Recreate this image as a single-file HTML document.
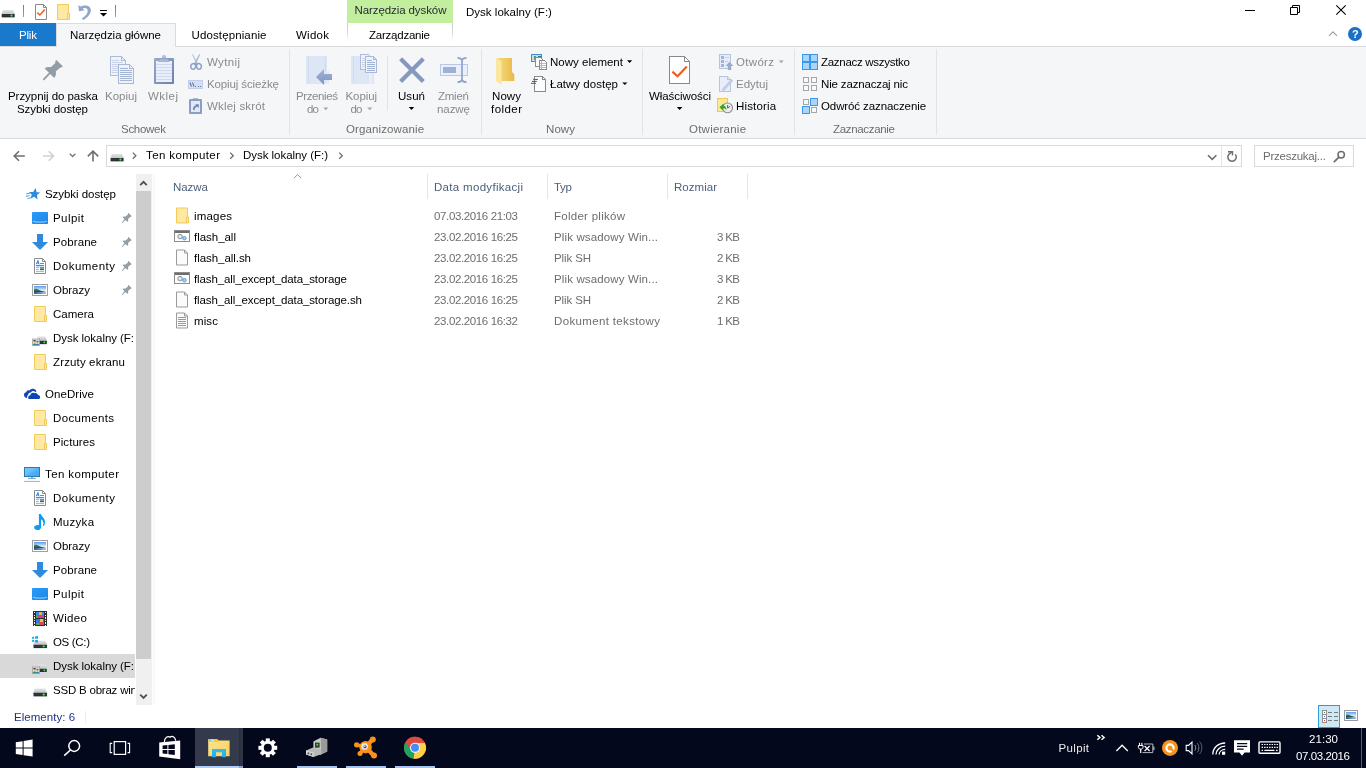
<!DOCTYPE html>
<html lang="pl">
<head>
<meta charset="utf-8">
<title>Dysk lokalny (F:)</title>
<style>
html,body{margin:0;padding:0;}
body{width:1366px;height:768px;overflow:hidden;background:#fff;position:relative;
 font-family:"Liberation Sans",sans-serif;font-size:12px;color:#000;}
.b{position:absolute;}
.t{position:absolute;white-space:pre;line-height:16px;height:16px;font-size:11.5px;}
svg{position:absolute;overflow:visible;}
.txt{position:absolute;left:0;top:0;width:1366px;height:768px;will-change:transform;}
.sep{position:absolute;width:1px;background:#e2e3e4;}
</style>
</head>
<body>
<!-- ===== title bar + ribbon tabs ===== -->
<div class="b" style="left:0;top:0;width:1366px;height:46px;background:#fff"></div>
<div class="b" style="left:347px;top:0;width:106px;height:23px;background:#c1ef9d"></div>
<div class="b" style="left:347px;top:23px;width:1px;height:18px;background:linear-gradient(#c9c7ca,#dcdcdd 60%,#fff)"></div>
<div class="b" style="left:452px;top:23px;width:1px;height:18px;background:linear-gradient(#c9c7ca,#dcdcdd 60%,#fff)"></div>
<div class="b" style="left:0;top:23px;width:56px;height:23px;background:#1979ca"></div>
<!-- ribbon body -->
<div class="b" style="left:0;top:46px;width:1366px;height:93px;background:#f5f6f7;border-top:1px solid #dadbdc;border-bottom:1px solid #dadbdc;box-sizing:border-box"></div>
<!-- active tab -->
<div class="b" style="left:56px;top:23px;width:120px;height:24px;background:#f5f6f7;border:1px solid #dadbdc;border-bottom:none;box-sizing:border-box"></div>
<!-- ribbon group separators -->
<div class="sep" style="left:289px;top:49px;height:86px"></div>
<div class="sep" style="left:481px;top:49px;height:86px"></div>
<div class="sep" style="left:642px;top:49px;height:86px"></div>
<div class="sep" style="left:794px;top:49px;height:86px"></div>
<div class="sep" style="left:936px;top:49px;height:86px"></div>
<div class="sep" style="left:387px;top:56px;height:55px"></div>

<!-- ===== address bar ===== -->
<div class="b" style="left:106px;top:145px;width:1136px;height:22px;border:1px solid #d9d9d9;box-sizing:border-box;background:#fff"></div>
<div class="b" style="left:1221px;top:146px;width:1px;height:20px;background:#e5e5e5"></div>
<div class="b" style="left:1254px;top:145px;width:100px;height:22px;border:1px solid #d9d9d9;box-sizing:border-box;background:#fff"></div>

<!-- ===== nav pane ===== -->
<div class="b" style="left:0;top:654px;width:135px;height:24px;background:#d9d9d9"></div>
<div class="b" style="left:136px;top:174px;width:16px;height:531px;background:#f0f0f0"></div>
<div class="b" style="left:136px;top:191px;width:15px;height:468px;background:#cdcdcd"></div>

<div class="b" style="left:153px;top:174px;width:2px;height:531px;background:#f8f8f8"></div>
<!-- ===== file list header separators ===== -->
<div class="b" style="left:427px;top:174px;width:1px;height:25px;background:#e5e5e5"></div>
<div class="b" style="left:547px;top:174px;width:1px;height:25px;background:#e5e5e5"></div>
<div class="b" style="left:667px;top:174px;width:1px;height:25px;background:#e5e5e5"></div>
<div class="b" style="left:747px;top:174px;width:1px;height:25px;background:#e5e5e5"></div>

<!-- ===== status bar ===== -->
<div class="b" style="left:85px;top:711px;width:1px;height:12px;background:#ececec"></div>
<div class="b" style="left:1318px;top:705px;width:22px;height:23px;background:#cde8f6;border:1px solid #26a0da;box-sizing:border-box"></div>

<!-- ===== taskbar ===== -->
<div class="b" style="left:0;top:728px;width:1366px;height:40px;background:#03081c"></div>
<div class="b" style="left:195px;top:728px;width:44px;height:40px;background:#343a4b"></div>
<div class="b" style="left:239px;top:728px;width:4px;height:40px;background:#2f3443;border-left:1px solid #2a2f3d;box-sizing:border-box"></div>
<div class="b" style="left:195px;top:766px;width:44px;height:2px;background:#b0cdf5"></div>
<div class="b" style="left:239px;top:766px;width:4px;height:2px;background:#8fa3c8"></div>
<div class="b" style="left:297px;top:766px;width:40px;height:2px;background:#a5c5f0"></div>
<div class="b" style="left:346px;top:766px;width:40px;height:2px;background:#a5c5f0"></div>
<div class="b" style="left:395px;top:766px;width:40px;height:2px;background:#a5c5f0"></div>
<div class="b" style="left:1361px;top:728px;width:1px;height:40px;background:#585c69"></div>

<!-- icons -->
<!-- ===== quick access toolbar ===== -->
<svg style="left:0;top:0" width="20" height="22" viewBox="0 0 20 22">
 <defs><linearGradient id="dg" x1="0" y1="0" x2="0" y2="1"><stop offset="0" stop-color="#e4e5e8"/><stop offset="1" stop-color="#c2c3c7"/></linearGradient></defs>
 <rect x="1.3" y="13.3" width="13.8" height="4.5" rx="0.8" fill="#d6d8de"/>
 <path d="M3 9.9 H12.9 L14.8 13.8 H1.6 Z" fill="url(#dg)"/>
 <rect x="1.8" y="13.9" width="12.8" height="3.3" rx="0.5" fill="#2c2c2c"/>
 <path d="M2.4 15.3 H9.6" stroke="#444" stroke-width="0.7" fill="none"/>
 <circle cx="11.5" cy="15.5" r="1.5" fill="#2fe83c" opacity="0.3"/><circle cx="11.5" cy="15.5" r="0.9" fill="#3cf048"/>
</svg>
<div class="b" style="left:23px;top:5px;width:1px;height:12px;background:linear-gradient(#7a7a7a,#a0a0a0)"></div>
<div class="b" style="left:115px;top:5px;width:1px;height:12px;background:linear-gradient(#7a7a7a,#a0a0a0)"></div>
<svg style="left:35px;top:4px" width="12" height="16" viewBox="0 0 12 16">
 <path d="M0.5 0.5 H8.5 L11.5 3.5 V15.5 H0.5 Z" fill="#fff" stroke="#8a8a8a"/>
 <path d="M8.5 0.5 V3.5 H11.5" fill="none" stroke="#8a8a8a"/>
 <path d="M2.3 8.6 L4.8 11 L9.8 5.6" fill="none" stroke="#f25a1d" stroke-width="1.5"/>
</svg>
<svg style="left:57px;top:4px" width="13" height="16" viewBox="0 0 13 16">
 <path d="M0.5 0.5 H11.5 V9.5 H12.5 V15.5 H0.5 Z" fill="#ffe9a2" stroke="#f1cb5c"/>
 <path d="M10.5 15.5 V9.5 H12.5" fill="none" stroke="#f1cb5c"/>
</svg>
<svg style="left:78px;top:4px" width="14" height="16" viewBox="0 0 14 16">
 <path d="M0.3 1 L1 7.2 L6.6 6.2 L4.6 4.6 C8.2 3 10.6 5.4 9.4 8.6 C8.6 10.8 6.4 13 3.8 14.6 L5.4 16 C9 14 12 10.8 12.8 7.6 C13.8 3 9 -0.4 2.4 2.6 Z" fill="#8fa6cd"/>
</svg>
<svg style="left:99px;top:10px" width="9" height="7" viewBox="0 0 9 7">
 <rect x="1" y="0" width="7" height="1" fill="#000"/>
 <path d="M1 3 H8 L4.5 6.5 Z" fill="#000"/>
</svg>
<!-- window controls -->
<svg style="left:1244px;top:4px" width="104" height="13" viewBox="0 0 104 13">
 <path d="M1 6.5 H11" stroke="#000" stroke-width="1" fill="none"/>
 <path d="M46.5 3.5 H53.5 V10.5 H46.5 Z M48.5 3.5 V1.5 H55.5 V8.5 H53.5" stroke="#000" stroke-width="1" fill="none"/>
 <path d="M92.3 1.3 L101.7 10.7 M101.7 1.3 L92.3 10.7" stroke="#000" stroke-width="1.1" fill="none"/>
</svg>
<svg style="left:1328px;top:30px" width="10" height="7" viewBox="0 0 10 7">
 <path d="M1 5.8 L5 1.8 L9 5.8" stroke="#9d9d9d" stroke-width="1.2" fill="none"/>
</svg>
<div class="b" style="left:1348px;top:27px;width:14px;height:14px;border-radius:7px;background:#1b6fc4"></div>
<!-- ===== ribbon icons (page coordinates) ===== -->
<svg style="left:0;top:0" width="1366" height="140" viewBox="0 0 1366 140">
<defs>
 <linearGradient id="gold" x1="0" y1="0" x2="1" y2="0"><stop offset="0" stop-color="#f7dc7f"/><stop offset="1" stop-color="#e9b948"/></linearGradient>
 <linearGradient id="clipb" x1="0" y1="0" x2="1" y2="1"><stop offset="0" stop-color="#9aaacb"/><stop offset="1" stop-color="#6d80ac"/></linearGradient>
 <linearGradient id="arr" x1="0" y1="0" x2="0" y2="1"><stop offset="0" stop-color="#a3b3d3"/><stop offset="1" stop-color="#7f94c0"/></linearGradient>
</defs>
<!-- pin -->
<path d="M56.4 60 L63 66.6 L59.9 68 L55.9 71.3 L55.9 75 L54.2 77.9 L44.9 68.8 L46 67.3 L51.1 66.9 L55.1 63.3 L55.4 61 Z" fill="#929da5"/>
<path d="M49.8 73.2 L43.8 79.4" stroke="#929da5" stroke-width="1.8" stroke-linecap="round" fill="none"/>
<!-- copy -->
<g shape-rendering="crispEdges">
 <path d="M110.5 56.5 H121.5 L125.5 60.5 V75.5 H110.5 Z" fill="#eef2fb" stroke="#aebcdb"/>
 <path d="M121.5 56.5 V60.5 H125.5" fill="none" stroke="#aebcdb"/>
 <path d="M112 60.5 H119 M112 62.5 H123 M112 64.5 H118 M112 66.5 H118 M112 68.5 H118 M112 70.5 H118 M112 72.5 H118" stroke="#c9d3e9" fill="none"/>
 <path d="M118.5 64.5 H129.5 L133.5 68.5 V83.5 H118.5 Z" fill="#eef2fb" stroke="#a9b8d9"/>
 <path d="M129.5 64.5 V68.5 H133.5" fill="none" stroke="#a9b8d9"/>
 <path d="M120 68.5 H128 M120 70.5 H132 M120 72.5 H132 M120 74.5 H132 M120 76.5 H132 M120 78.5 H132 M120 80.5 H132" stroke="#a4b4d5" fill="none"/>
</g>
<!-- paste -->
<rect x="162" y="55" width="4" height="5" rx="1.5" fill="#b4c0da"/>
<rect x="154" y="58" width="20" height="26" rx="1" fill="url(#clipb)"/>
<rect x="156" y="61" width="16" height="21" fill="#e9effb"/>
<path d="M156 64.5 H172 M156 67.5 H172 M156 70.5 H172 M156 73.5 H172 M156 76.5 H172 M156 79.5 H172" stroke="#cfd9ee" fill="none" shape-rendering="crispEdges"/>
<path d="M158 62 L160.5 59 H167.5 L170 62 Z" fill="#a9b7d6"/>
<!-- scissors -->
<path d="M191.8 54 L193.2 54.4 L198.6 64.6 L197 65.4 Z" fill="#bcc8e0"/>
<path d="M200.4 54 L199 54.4 L193.6 64.6 L195.2 65.4 Z" fill="#a3b4d5"/>
<g fill="none" stroke="#8aa0c9" stroke-width="1.5">
 <path d="M195.4 64.2 C192.6 62.6 190.4 64.6 190.8 67.2 C191.2 69.8 194.6 70 195.4 67.6 C195.8 66.4 195.8 65.2 195.4 64.2 Z"/>
 <path d="M196.8 64.2 C199.6 62.6 201.8 64.6 201.4 67.2 C201 69.8 197.6 70 196.8 67.6 C196.4 66.4 196.4 65.2 196.8 64.2 Z"/>
</g>
<!-- copy path -->
<rect x="188.5" y="80.5" width="14" height="8" fill="#d6dff1" stroke="#c3cfe8" shape-rendering="crispEdges"/>
<path d="M190 82.5 L191.5 86.5 M192.5 82.5 L194 86.5" stroke="#5c76ab" stroke-width="1.1" fill="none"/>
<path d="M195 86.5 H196 M197.5 86.5 H198.5 M200 86.5 H201" stroke="#5c76ab" stroke-width="1" fill="none" shape-rendering="crispEdges"/>
<!-- paste shortcut -->
<rect x="193" y="98" width="5" height="2" fill="#a9b7d6"/>
<rect x="189" y="99" width="13" height="15" rx="1" fill="#8c9ec4"/>
<rect x="191" y="101" width="9" height="11" fill="#e1e8f6"/>
<path d="M193 110 C193 106.5 194.5 105.6 196.2 105.6 L195 104.2 H198.8 V108 L197.4 106.8 C196 106.8 194.8 107.6 194.6 110 Z" fill="#6f86b5"/>
<!-- move to -->
<g shape-rendering="crispEdges">
 <path d="M306 56 H327 V71 H329 V84 H306 Z" fill="#dde6f5"/>
 <path d="M308.5 57 V83 M325.5 57 V71" stroke="#cfdaef" fill="none"/>
 <path d="M327 71 V84" stroke="#e9eef8" fill="none"/>
</g>
<path d="M316 77 L324 69 V74 H332 V80 H324 V85 Z" fill="url(#arr)"/>
<!-- copy to -->
<g shape-rendering="crispEdges">
 <path d="M351 56 H372 V71 H374 V84 H351 Z" fill="#dde6f5"/>
 <path d="M353.5 57 V83" stroke="#cfdaef" fill="none"/>
 <path d="M370.5 71 V84" stroke="#e9eef8" stroke-width="3" fill="none"/>
 <path d="M360.5 54.5 H368.5 L371.5 57.5 V69.5 H360.5 Z" fill="#eef2fb" stroke="#aebcdb"/>
 <path d="M362 58.5 H367 M362 60.5 H366 M362 62.5 H366 M362 64.5 H366 M362 66.5 H366" stroke="#c9d3e9" fill="none"/>
 <path d="M365.5 56.5 H373.5 L376.5 59.5 V72.5 H365.5 Z" fill="#eef2fb" stroke="#a9b8d9"/>
 <path d="M373.5 56.5 V59.5 H376.5" fill="none" stroke="#a9b8d9"/>
 <path d="M367 60.5 H372 M367 62.5 H375 M367 64.5 H375 M367 66.5 H375 M367 68.5 H375 M367 70.5 H375" stroke="#a4b4d5" fill="none"/>
</g>
<path d="M323.3 107.5 H328.3 L325.8 110.2 Z M367.3 107.5 H372.3 L369.8 110.2 Z M778.7 60.5 H783.7 L781.2 63.2 Z" fill="#a6a6a6"/>
<!-- delete X -->
<path d="M400.6 58.8 L423.3 81.4 M423.3 58.8 L400.6 81.4" stroke="#8598be" stroke-width="4.2" fill="none"/>
<path d="M408.8 107 H414.2 L411.5 110 Z M676.8 107 H682.4 L679.6 110 Z M627 60.3 H632.2 L629.6 63 Z M622.2 82.4 H627.4 L624.8 85.1 Z" fill="#000"/>
<!-- rename -->
<rect x="440.5" y="64.5" width="27" height="11" fill="#e9effb" stroke="#b9c8e6" shape-rendering="crispEdges"/>
<rect x="443" y="67" width="13" height="6" fill="#9fb0d2" shape-rendering="crispEdges"/>
<path d="M457.5 57.8 C460 57.8 461.3 58.6 462 60 C462.7 58.6 464 57.8 466.5 57.8 M457.5 82.2 C460 82.2 461.3 81.4 462 80 C462.7 81.4 464 82.2 466.5 82.2 M462 59.5 V80.5" stroke="#90a3ca" stroke-width="1.7" fill="none"/>
<!-- new folder -->
<path d="M497 58 H512 V72 L514.3 74.2 V81 H500 Z" fill="url(#gold)"/>
<path d="M496 58 L501.5 61.6 V85 L496 81 Z" fill="#fce7a2"/>
<!-- new item -->
<g shape-rendering="crispEdges">
 <rect x="531.5" y="54.5" width="10" height="7" fill="#bfe0f2" stroke="#3d8fc8"/>
 <rect x="534" y="56" width="2" height="4" fill="#7a8a5a"/><rect x="538" y="56" width="3" height="1" fill="#2f6f9f"/>
 <path d="M535.5 57.5 H540.5 L542.5 59.5 V66.5 H535.5 Z" fill="#fdfdfd" stroke="#8c8c8c"/>
 <path d="M539.5 60.5 H544.5 L546.5 62.5 V69.5 H539.5 Z" fill="#fff" stroke="#8c8c8c"/>
 <path d="M540 63.5 H546 M540 65.5 H546 M540 67.5 H546" stroke="#9cc4f0" fill="none"/>
 <path d="M541.5 61 V69" stroke="#f09a9a" fill="none"/>
</g>
<!-- easy access -->
<path d="M534.5 76.5 H542.5 L545.5 79.5 V91.5 H534.5 Z M542.5 76.5 V79.5 H545.5" fill="#fdfdfd" stroke="#8a8a8a" shape-rendering="crispEdges"/>
<path d="M533.2 79.4 H538 M532 81.4 H536.8 M531 83.3 H536" stroke="#1f5fae" stroke-width="1" fill="none"/>
<!-- properties big -->
<path d="M669.5 56.5 H684.5 L689.5 61.5 V83.5 H669.5 Z" fill="#fff" stroke="#8a8a8a" shape-rendering="crispEdges"/>
<path d="M684.5 56.5 V61.5 H689.5" fill="none" stroke="#8a8a8a" shape-rendering="crispEdges"/>
<path d="M672.4 71.6 L677.6 76.2 L686.8 66.6" fill="none" stroke="#f25a1d" stroke-width="2.1"/>
<!-- open -->
<g shape-rendering="crispEdges">
 <rect x="719.5" y="54.5" width="11" height="14" fill="#e6ecf8" stroke="#b7c4e0"/>
 <rect x="721" y="56" width="3" height="3" fill="#a3b3d4"/><rect x="721" y="60" width="3" height="3" fill="#a3b3d4"/><rect x="721" y="64" width="3" height="3" fill="#a3b3d4"/>
 <path d="M725 57.5 H729 M725 61.5 H728" stroke="#c4cfe6" fill="none"/>
</g>
<path d="M729.5 61.8 L733.4 66 H731.2 V70 H727.8 V66 H725.6 Z" fill="#9aabcf"/>
<!-- edit -->
<path d="M719.5 76.5 H727.5 L730.5 79.5 V91.5 H719.5 Z M727.5 76.5 V79.5 H730.5" fill="#e9eef9" stroke="#b7c4e0" shape-rendering="crispEdges"/>
<path d="M722 89.6 L731.2 79.4 L732.8 80.8 L723.6 91 Z" fill="#c5d0e8" stroke="#b0bedd" stroke-width="0.6"/>
<!-- history -->
<rect x="717.5" y="98.5" width="10" height="13" fill="#ffe896" stroke="#f0c850" shape-rendering="crispEdges"/>
<circle cx="727.6" cy="107.9" r="4.9" fill="#ededed" stroke="#8e8e8e" stroke-width="1.1"/>
<path d="M727.6 105 V108 L730 106.4" stroke="#555" stroke-width="0.9" fill="none"/>
<path d="M719.4 107.2 L723.6 103.6 L723.4 105.6 C725.4 105.8 726.6 107.6 726.4 110.4 C725.6 108.6 724.8 108.2 723.2 108.2 L723 110.6 Z" fill="#2fa830"/>
<!-- select all -->
<g shape-rendering="crispEdges">
 <rect x="802" y="54" width="16" height="16" fill="#3b97e9"/>
 <rect x="803" y="55" width="6" height="6" fill="#a9d5fb"/><rect x="811" y="55" width="6" height="6" fill="#a9d5fb"/>
 <rect x="803" y="63" width="6" height="6" fill="#a9d5fb"/><rect x="811" y="63" width="6" height="6" fill="#a9d5fb"/>
 <!-- select none -->
 <rect x="803.5" y="77.5" width="5" height="5" fill="#fafafa" stroke="#a6a6a6"/><rect x="811.5" y="77.5" width="5" height="5" fill="#fafafa" stroke="#a6a6a6"/>
 <rect x="803.5" y="85.5" width="5" height="5" fill="#fafafa" stroke="#a6a6a6"/><rect x="811.5" y="85.5" width="5" height="5" fill="#fafafa" stroke="#a6a6a6"/>
 <!-- invert -->
 <rect x="803.5" y="99.5" width="5" height="5" fill="#fafafa" stroke="#a6a6a6"/>
 <rect x="811.5" y="107.5" width="5" height="5" fill="#fafafa" stroke="#a6a6a6"/>
 <rect x="810" y="98" width="8" height="8" fill="#3b97e9"/><rect x="811" y="99" width="6" height="6" fill="#a9d5fb"/>
 <rect x="802" y="106" width="8" height="8" fill="#3b97e9"/><rect x="803" y="107" width="6" height="6" fill="#a9d5fb"/>
</g>
</svg>
<!-- ===== address bar / nav pane / list icons (page coordinates) ===== -->
<svg style="left:0;top:140px" width="1366" height="588" viewBox="0 140 1366 588">
<defs>
 <linearGradient id="dtop" x1="0" y1="0" x2="0" y2="1"><stop offset="0" stop-color="#e4e5e8"/><stop offset="1" stop-color="#c2c3c7"/></linearGradient>
 <linearGradient id="sky" x1="0" y1="0" x2="0" y2="1"><stop offset="0" stop-color="#4f9be0"/><stop offset="0.5" stop-color="#d5ebf8"/><stop offset="0.62" stop-color="#3f7f68"/><stop offset="1" stop-color="#1d4b56"/></linearGradient>
 <linearGradient id="sky2" x1="0" y1="0" x2="0" y2="1"><stop offset="0" stop-color="#5b9cf5"/><stop offset="0.55" stop-color="#dff0fc"/><stop offset="1" stop-color="#dff0fc"/></linearGradient>
 <linearGradient id="water" x1="0" y1="0" x2="1" y2="0"><stop offset="0" stop-color="#27569a"/><stop offset="1" stop-color="#a9c6dc"/></linearGradient>
 <linearGradient id="hill" x1="0" y1="0" x2="0" y2="1"><stop offset="0" stop-color="#4a8a5c"/><stop offset="1" stop-color="#234a3a"/></linearGradient>
 <linearGradient id="desk" x1="0" y1="0" x2="1" y2="1"><stop offset="0" stop-color="#2c9bf7"/><stop offset="1" stop-color="#1b86ea"/></linearGradient>
 <linearGradient id="mon" x1="0" y1="0" x2="1" y2="1"><stop offset="0" stop-color="#7ccaf9"/><stop offset="0.5" stop-color="#62bbf6"/><stop offset="0.52" stop-color="#4fb0f2"/><stop offset="1" stop-color="#46a8ee"/></linearGradient>
 <g id="drv"><rect x="-0.3" y="3.4" width="13.8" height="4.5" rx="0.8" fill="#d6d8de"/><path d="M1.4 0 H11.3 L13.2 3.9 H0 Z" fill="url(#dtop)"/><rect x="0.2" y="4" width="12.8" height="3.3" rx="0.5" fill="#2c2c2c"/><path d="M0.8 5.4 H8" stroke="#444" stroke-width="0.7" fill="none"/><circle cx="9.9" cy="5.6" r="1.5" fill="#2fe83c" opacity="0.3"/><circle cx="9.9" cy="5.6" r="0.9" fill="#3cf048"/></g>
 <g id="fold"><path d="M0.5 0.5 H11.5 V9.5 H12.5 V15.5 H0.5 Z" fill="#ffe9a2" stroke="#f1cb5c"/><path d="M10.5 15.5 V9.5 H12.5" fill="none" stroke="#f1cb5c"/></g>
 <g id="spin"><path d="M6.7 0 L10 3.3 L8.4 4 L6.4 5.7 V7.5 L5.6 9 L3.7 7 L0.3 10.2 L0 9.8 L2.7 6 L1 4.4 L1.5 3.6 L4 3.4 L6 1.6 L6.2 0.5 Z" fill="#929da5"/></g>
 <g id="pic"><rect x="0.5" y="0.5" width="15" height="11" fill="#fff" stroke="#a0a0a0"/><rect x="2" y="2" width="12" height="8" fill="url(#sky2)"/><rect x="2" y="7.6" width="12" height="2.4" fill="url(#water)"/><path d="M2 5 C4 4.5 6 5.2 8 6.6 L13.4 7.9 H2 Z" fill="url(#hill)"/></g>
 <g id="docs"><path d="M0.5 0.5 H8.5 L11.5 3.5 V15.5 H0.5 Z" fill="#fff" stroke="#8c8c8c"/><path d="M8.5 0.5 V3.5 H11.5" fill="none" stroke="#8c8c8c"/>
   <path d="M2.2 6.4 L4 2.4 L5 6.4 M2.8 5 H4.8" stroke="#1f7fd8" stroke-width="0.9" fill="none"/><path d="M6 5.5 H10" stroke="#3f9fe0" fill="none"/><path d="M2 7.7 H10" stroke="#1f7fd8" stroke-width="1.1" fill="none"/>
   <path d="M2 9.6 H5 M2 11.6 H5 M2 13.6 H10" stroke="#a8a8a8" stroke-width="0.9" fill="none"/><rect x="6" y="9" width="4" height="1.6" fill="#5a8ff0"/><rect x="6" y="10.6" width="4" height="1.6" fill="#3f6f4a"/></g>
 <g id="dl"><path d="M5 0 H11 V8 H16 L8 16 L0 8 H5 Z" fill="#2e8ade"/></g>
 <g id="deskt"><rect x="0" y="0" width="16" height="12" rx="0.8" fill="url(#desk)"/><path d="M1.5 9.5 H2.5 M13.5 9.5 H14.5" stroke="#fff" fill="none"/><path d="M3 10 H13" stroke="#bfe0fb" stroke-width="0.8" fill="none"/></g>
 <g id="share"><use href="#drv" transform="translate(4.6,0.2) scale(0.78,1.02)"/><rect x="0.3" y="2.6" width="7.4" height="6.6" fill="#d8e6e0" stroke="#8f8f8f" stroke-width="0.6"/><path d="M0.7 8.9 C0.7 6.4 4.6 6.4 4.6 8.9 Z" fill="#2f9a5e"/><circle cx="2.6" cy="4.9" r="1.3" fill="#c99a78"/><path d="M1.3 4.6 C1.5 3.2 3.7 3.2 3.9 4.6 Z" fill="#4a3a30"/><path d="M3.7 8.9 C3.7 6.9 7.3 6.9 7.3 8.9 Z" fill="#2f7fc8"/><circle cx="5.5" cy="5.5" r="1.15" fill="#c99a78"/><path d="M4.3 5.2 C4.5 4 6.5 4 6.7 5.2 Z" fill="#4a3a30"/></g>
 <g id="blank"><path d="M0.5 0.5 H8.5 L11.5 3.5 V15.5 H0.5 Z" fill="#fbfbfb" stroke="#9a9a9a"/><path d="M8.5 0.5 V3.5 H11.5" fill="none" stroke="#9a9a9a"/></g>
 <g id="bat"><rect x="0.5" y="0.5" width="15" height="11" fill="#fff" stroke="#8c8c8c"/><rect x="1" y="1" width="14" height="2" fill="#6e6e6e"/>
   <circle cx="6" cy="6.6" r="2.3" fill="#d9d9d9" stroke="#8a8a8a" stroke-width="0.9"/><circle cx="6" cy="6.6" r="0.8" fill="#fff"/>
   <circle cx="10.4" cy="8.2" r="1.8" fill="#9fd0f5" stroke="#3f8fd6" stroke-width="0.8"/></g>
 <g id="chev"><path d="M0.6 0.6 L3.7 3.7 L0.6 6.8" stroke="#6e6e6e" stroke-width="1.3" fill="none"/></g>
</defs>
<!-- nav arrows -->
<g fill="none" stroke-width="1.6">
 <path d="M24.8 156 H14.2 M19 151.2 L14.2 156 L19 160.8" stroke="#6e6e6e"/>
 <path d="M43 156 H53.6 M48.8 151.2 L53.6 156 L48.8 160.8" stroke="#d2d2d2"/>
 <path d="M69.8 153.8 L72.6 156.6 L75.4 153.8" stroke="#7a7a7a" stroke-width="1.4"/>
 <path d="M93 161.4 V151.4 M87.8 156.4 L93 151.2 L98.2 156.4" stroke="#6e6e6e"/>
 <path d="M1208 155.2 L1212.2 159.4 L1216.4 155.2" stroke="#6e6e6e"/>
 <path d="M1235.3 154.4 A4.2 4.2 0 1 1 1229.4 153.8 L1231.8 152.2" stroke="#6e6e6e" stroke-width="1.5"/>
 <path d="M1228 151.7 H1232.5 V155.6" stroke="#6e6e6e" stroke-width="1.4"/>
 <circle cx="1341.2" cy="154.8" r="3.2" stroke="#6e6e6e" stroke-width="1.5"/>
 <path d="M1339 157.2 L1333.8 162.2" stroke="#6e6e6e" stroke-width="1.8"/>
</g>
<use href="#drv" x="110.5" y="153.9"/>
<use href="#chev" x="132.2" y="152"/>
<use href="#chev" x="229.6" y="152"/>
<use href="#chev" x="338.6" y="152"/>
<!-- scrollbar arrows -->
<path d="M140.2 185.2 L143.5 181.8 L146.8 185.2" stroke="#505050" stroke-width="1.8" fill="none"/>
<path d="M140.2 694.6 L143.5 698 L146.8 694.6" stroke="#505050" stroke-width="1.8" fill="none"/>
<!-- sort arrow -->
<path d="M294 178 L297.6 174.6 L301.2 178" stroke="#8a8a8a" stroke-width="0.9" fill="none"/>
<!-- quick access star -->
<path d="M35.6 188 L36.6 192.2 L40.2 192.6 L37 195 L37.6 199.4 L34.2 196.8 L30.2 198.8 L31.8 194.8 L29 192 L33.2 192 Z" fill="#2b8be0"/>
<path d="M26.2 194 L30 193.2 M25.8 196.4 L29.6 195.6 M27.4 198.6 L30.4 197.8" stroke="#4ea3ea" stroke-width="1" fill="none"/>
<!-- quick access items -->
<use href="#deskt" x="32" y="212"/>
<use href="#dl" x="32" y="234"/>
<use href="#docs" x="34" y="258"/>
<use href="#pic" x="32" y="284"/>
<use href="#fold" x="34" y="306"/>
<use href="#share" x="32" y="336.4"/>
<use href="#fold" x="34" y="354"/>
<use href="#spin" x="121.8" y="213"/>
<use href="#spin" x="121.8" y="237"/>
<use href="#spin" x="121.8" y="261"/>
<use href="#spin" x="121.8" y="285"/>
<!-- onedrive -->
<path d="M24 394.8 C24 393.4 25 392.5 26.2 392.3 C26.4 390.7 28 389.9 29.6 390.4 C30.6 389.1 32.6 388.6 34 389 C35.5 389.4 36.3 390.6 36.3 391.9 L35 391.7 C33.8 390.7 32 390.9 30.9 392.6 C29.5 392.4 28.3 393.4 28.2 394.7 C27.4 395.1 27 396.1 27.2 397.4 L26.4 397.9 C24.8 397.7 24 396.3 24 394.8 Z" fill="#0d47b7"/>
<path d="M29.8 399.1 C28.4 399.1 27.9 397.9 28.2 396.9 C28.5 395.9 29.4 395.5 30.2 395.5 C30.4 393.4 32.6 392 34.6 393.2 C35.8 392.6 37.6 393.2 38 395 C39.4 395.2 40.3 396.2 40.1 397.5 C40 398.5 39.2 399.1 38.4 399.1 Z" fill="#0d47b7"/>
<use href="#fold" x="34" y="410"/>
<use href="#fold" x="34" y="434"/>
<!-- this pc -->
<rect x="24.5" y="467.5" width="15" height="9" fill="url(#mon)" stroke="#2a7ab8"/>
<path d="M28 478.4 H36" stroke="#5f8fbd" stroke-width="0.9" fill="none"/><path d="M31 477 H33 V478 H31 Z" fill="#8fb0d0"/>
<path d="M24 481.4 H40" stroke="#9fb3c9" stroke-width="1" fill="none"/>
<use href="#docs" x="34" y="490"/>
<path d="M38.9 514 H41 C41.2 516.4 45 518 45 522 C45 524 44.4 525.4 43.4 526.2 L42.7 525.4 C43.6 524.4 43.6 523 43.2 522 C42.8 520.6 42 520 41 519.6 V527.4 C41 529 39.4 530 37.4 530 C35.4 530 34.1 529 34.1 527.6 C34.1 526 35.8 525 37.8 525 C38.2 525 38.6 525 38.9 525.2 Z" fill="#0c9cf5"/>
<use href="#pic" x="32" y="540"/>
<use href="#dl" x="32" y="562"/>
<use href="#deskt" x="32" y="588"/>
<!-- video -->
<g shape-rendering="crispEdges">
 <rect x="33" y="611" width="14" height="15" fill="#2e2e2e"/>
 <rect x="36" y="612" width="8" height="6" fill="#3f86e0"/><rect x="36" y="619" width="8" height="6" fill="#3a78d8"/>
 <rect x="39" y="612" width="3" height="3" fill="#f0b030"/><rect x="38" y="615" width="5" height="3" fill="#c8428a"/><rect x="36" y="616" width="2" height="2" fill="#58a848"/>
 <rect x="40" y="619" width="3" height="3" fill="#f0c040"/><rect x="39" y="622" width="5" height="3" fill="#d04a6a"/><rect x="36" y="623" width="3" height="2" fill="#58a848"/>
 <path d="M34.5 612 V626 M45.5 612 V626" stroke="#f0f0f0" stroke-dasharray="1.4 1.2" fill="none"/>
</g>
<!-- OS (C:) -->

<use href="#drv" transform="translate(33.4,640.7) scale(1.04,1)"/>
<path d="M32 636.9 L34.1 636.6 V638.8 H32 Z M35 636.4 L38 636 V638.8 H35 Z M32 639.9 H34.1 V642.1 L32 641.8 Z M35 639.9 H38 V642.7 L35 642.3 Z" fill="#19aff5"/>
<use href="#share" x="32" y="664.4"/>
<use href="#drv" transform="translate(33.4,688.6) scale(1.04,1.05)"/>
<!-- file list icons -->
<use href="#fold" x="176" y="207.5"/>
<use href="#bat" x="174" y="230"/>
<use href="#blank" x="176" y="249.5"/>
<use href="#bat" x="174" y="272"/>
<use href="#blank" x="176" y="291.5"/>
<use href="#blank" x="176" y="312.5"/>
<path d="M178 317 H186 M178 319 H186 M178 321 H186 M178 323 H186 M178 325 H186" stroke="#8e8e8e" stroke-width="0.9" fill="none" transform="translate(0,0.5)" shape-rendering="crispEdges"/>
<!-- status bar view buttons -->
<g shape-rendering="crispEdges">
 <path d="M1322.5 710.5 H1326.5 V722.5 H1322.5 Z M1322.5 714.5 H1326.5 M1322.5 718.5 H1326.5" fill="#fff" stroke="#8f8f8f"/>
 <rect x="1324" y="712" width="1" height="1" fill="#3f7f5f"/><rect x="1324" y="716" width="1" height="1" fill="#4a7fe8"/><rect x="1324" y="720" width="1" height="1" fill="#e03030"/>
 <path d="M1328 712.5 H1332 M1334 712.5 H1338 M1328 716.5 H1332 M1334 716.5 H1338 M1328 720.5 H1332 M1334 720.5 H1338" stroke="#7a7a7a" fill="none"/>
 <rect x="1344.5" y="710.5" width="13" height="10" fill="#fff" stroke="#9a9a9a"/>
 <rect x="1346" y="712" width="10" height="7" fill="url(#sky2)"/><rect x="1346" y="716.6" width="10" height="2.4" fill="url(#water)"/><path d="M1346 714.6 C1348 714.2 1350 715 1351.6 716 L1355.4 717 H1346 Z" fill="url(#hill)" shape-rendering="auto"/>
</g>
</svg>
<!-- ===== taskbar icons (page coordinates) ===== -->
<svg style="left:0;top:728px" width="1366" height="40" viewBox="0 728 1366 40">
<defs>
 <linearGradient id="efold" x1="0" y1="0" x2="1" y2="1"><stop offset="0" stop-color="#fde492"/><stop offset="1" stop-color="#f8d25c"/></linearGradient>
 <linearGradient id="estand" x1="0" y1="0" x2="0" y2="1"><stop offset="0" stop-color="#3cb8ee"/><stop offset="1" stop-color="#12b2f4"/></linearGradient>
</defs>
<!-- start -->
<path d="M15.8 742.2 L22.6 741.2 V747.6 H15.8 Z M23.6 741 L32.6 739.6 V747.6 H23.6 Z M15.8 748.6 H22.6 V755 L15.8 754 Z M23.6 748.6 H32.6 V756.6 L23.6 755.2 Z" fill="#fff"/>
<!-- search -->
<circle cx="74.2" cy="746" r="5.4" fill="none" stroke="#fff" stroke-width="1.5"/>
<path d="M70.4 750 L64.2 755.6" stroke="#fff" stroke-width="1.6" fill="none"/>
<!-- task view -->
<rect x="114.2" y="741.6" width="11.4" height="12.8" fill="none" stroke="#fff" stroke-width="1.2"/>
<path d="M112.2 743.4 H110.2 V752.6 H112.2 M127.6 743.4 H129.6 V752.6 H127.6" fill="none" stroke="#fff" stroke-width="1.1"/>
<!-- store -->
<path d="M159.2 742.6 L180.2 740.4 V759.2 L159.2 756.6 Z" fill="#fff"/>
<path d="M164.4 742 C164.4 737.4 168 735.6 170 737.2 C172.4 735.2 175.6 737.6 175.6 740.8" stroke="#fff" stroke-width="1.2" fill="none"/>
<path d="M162.6 745.4 L167.4 745 V749 H162.6 Z M168.4 744.9 L174.8 744.3 V749 H168.4 Z M162.6 750 H167.4 V754 L162.6 753.5 Z M168.4 750 H174.8 V754.9 L168.4 754.2 Z" fill="#03081c"/>
<!-- explorer -->
<path d="M208.2 739.2 H217.4 L218.4 740.4 H229.6 V756.2 H208.2 Z" fill="url(#efold)"/>
<path d="M208.2 739.2 H217.4 L218.4 740.4 L219 741.8 H208.2 Z" fill="#f5c634"/>
<rect x="209.6" y="739.9" width="4.2" height="1.1" fill="#d9f0e8"/><rect x="209.6" y="739.9" width="1.2" height="1.1" fill="#35b6c8"/>
<path d="M212 757.2 V749.6 Q212 749 212.6 749 H225.4 Q226 749 226 749.6 V757.2 H222.1 V752.2 H216 V757.2 Z" fill="url(#estand)"/>
<!-- settings gear -->
<g transform="translate(267.8 747.8)">
 <g fill="#fff"><circle r="7"/>
 <rect x="-2" y="-9.4" width="4" height="18.8"/><rect x="-2" y="-9.4" width="4" height="18.8" transform="rotate(45)"/><rect x="-2" y="-9.4" width="4" height="18.8" transform="rotate(90)"/><rect x="-2" y="-9.4" width="4" height="18.8" transform="rotate(135)"/></g>
 <circle r="4" fill="#03081c"/>
</g>
<!-- device icon -->
<path d="M313.4 741.4 L320.6 737.8 L327.2 739.6 V751.4 L320 755 L313.4 753 Z" fill="#c9c9c9"/>
<path d="M320.6 737.8 L327.2 739.6 V751.4 L321.4 754.2 Z" fill="#9a9a9a"/>
<rect x="315" y="742.6" width="4.6" height="5" fill="#2c3a2c"/><rect x="316.4" y="743.8" width="1.8" height="1.8" fill="#3ce544"/>
<path d="M306 750.4 L313 747.4 L321 749.6 V754.2 L313.6 757 L306 754.6 Z" fill="#b9b9b9"/>
<path d="M306 750.4 L313.6 752.6 V757 L306 754.6 Z" fill="#d8d8d8"/>
<rect x="307.6" y="752.4" width="1.6" height="2" fill="#555"/><rect x="310.6" y="753.2" width="1.6" height="2" fill="#555"/>
<!-- avast -->
<g fill="#f7931d" stroke="#f7931d">
 <circle cx="365.6" cy="747.2" r="6.2" stroke="none"/>
 <path d="M365.8 747 L372.2 739.8" stroke-width="4.2"/><circle cx="372.8" cy="739.4" r="3" stroke="none"/>
 <path d="M365.8 747 L357 745" stroke-width="3.8"/><circle cx="356.6" cy="744.8" r="2.6" stroke="none"/>
 <path d="M365.8 747 L373.4 755.2" stroke-width="4.2"/><circle cx="374" cy="755.6" r="3" stroke="none"/>
 <path d="M365.8 747 L360.6 752.8" stroke-width="3.8"/><circle cx="360" cy="753.4" r="2.5" stroke="none"/>
</g>
<circle cx="364.6" cy="746.4" r="3.4" fill="#e3e3e3"/><circle cx="365" cy="746.8" r="1.5" fill="#555"/><circle cx="364.7" cy="746.3" r="0.7" fill="#e3e3e3"/>
<!-- chrome -->
<g transform="translate(415 747.8)">
 <circle r="11" fill="#dd4b3e"/>
 <path d="M0 0 L-9.53 -5.5 A11 11 0 0 0 -1.4 10.9 L4.4 2.6 Z" fill="#1da362"/>
 <path d="M0 0 L-1.4 10.9 A11 11 0 0 0 9.8 -5 L0 -5 Z" fill="#ffcf48"/>
 <path d="M-9.53 -5.5 A11 11 0 0 1 9.8 -5 L0 -5 L-4.6 2 Z" fill="#dd4b3e"/>
 <circle r="5.1" fill="#f4f4f4"/><circle r="4" fill="#4a8bf5"/>
</g>
<!-- tray -->
<path d="M1097.3 735.2 L1099.9 737.5 L1097.3 739.8 M1101.5 735.2 L1104.1 737.5 L1101.5 739.8" stroke="#fff" stroke-width="1.5" fill="none"/>
<path d="M1116.4 751 L1122.1 745.2 L1127.8 751" stroke="#fff" stroke-width="1.3" fill="none"/>
<!-- battery/plug -->
<g stroke="#fff" fill="none" stroke-width="1">
 <path d="M1139.5 742.8 V745.2 M1141.9 742.8 V745.2" stroke-width="1.1"/><path d="M1138.4 745.5 H1143 V747.4 C1143 749.7 1138.4 749.7 1138.4 747.4 Z" stroke-width="1"/><path d="M1140.7 749 V753" stroke-width="1.2"/>
 <path d="M1144 744 H1152.8 V752.6 H1142.4" stroke="#b4b7c0" stroke-width="1"/><path d="M1153.8 746.6 V750" stroke="#b4b7c0" stroke-width="1.3"/>
 <path d="M1144.6 746 L1149.6 751 M1149.6 746 L1144.6 751" stroke-width="1.2"/>
</g>
<!-- avast tray -->
<circle cx="1170" cy="747.9" r="8" fill="#f7931d"/>
<circle cx="1170" cy="748" r="3.6" fill="none" stroke="#fff" stroke-width="2.2"/>
<path d="M1170.4 748 L1174.5 752.4" stroke="#f7931d" stroke-width="2.2"/>
<!-- speaker -->
<path d="M1186.2 745.4 H1188.6 L1192 742 V754 L1188.6 750.6 H1186.2 Z" fill="none" stroke="#fff" stroke-width="1.1"/>
<path d="M1194.8 745 C1196 746.6 1196 749 1194.8 750.6" stroke="#9aa0ad" fill="none" stroke-width="1"/>
<path d="M1197.2 743.2 C1199.4 745.8 1199.4 749.8 1197.2 752.4" stroke="#7a8090" fill="none" stroke-width="1"/>
<path d="M1199.6 741.6 C1202.6 745 1202.6 750.6 1199.6 754" stroke="#5a6070" fill="none" stroke-width="1"/>
<!-- wifi -->
<g fill="none" stroke="#fff">
 <path d="M1212.8 754.6 C1212.8 748 1218 743 1225.2 743" stroke-width="1.3"/>
 <path d="M1216 754.6 C1216 750 1220 746.2 1225.2 746.2" stroke-width="1.3"/>
 <path d="M1219.2 754.6 C1219.2 751.6 1221.8 749.4 1225.2 749.4" stroke-width="1.3"/>
</g>
<rect x="1222" y="751.6" width="3.2" height="3.2" fill="#fff"/>
<!-- notifications -->
<path d="M1234 740.2 H1250 V752.4 H1244.6 L1242 755.8 L1239.4 752.4 H1234 Z" fill="#fff"/>
<path d="M1237 743 H1247.2 V744.2 H1237 Z M1237 745.8 H1247.2 V747 H1237 Z M1237 748.6 H1243.6 V749.8 H1237 Z" fill="#03081c"/>
<!-- keyboard -->
<rect x="1259" y="741.9" width="21" height="11.4" rx="1" fill="none" stroke="#fff" stroke-width="1.4"/>
<path d="M1261.6 744.5 H1278 M1261.6 747.3 H1278" stroke="#fff" stroke-width="1.2" stroke-dasharray="1.4 1.1" fill="none"/>
<path d="M1261.6 750.3 h1.4 M1264.4 750.3 H1274.4 M1276 750.3 h1.6" stroke="#fff" stroke-width="1.2" fill="none"/>
</svg>

<!-- text -->
<div class="txt">
<span class="t" style="left:354.5px;top:2px;color:#2a2a3a;letter-spacing:-0.09px;">Narzędzia dysków</span>
<span class="t" style="left:466px;top:4px;letter-spacing:0.02px;">Dysk lokalny (F:)</span>
<span class="t" style="left:19px;top:27px;color:#fff;letter-spacing:-0.18px;">Plik</span>
<span class="t" style="left:70px;top:27px;letter-spacing:-0.03px;">Narzędzia główne</span>
<span class="t" style="left:191.5px;top:27px;letter-spacing:0.12px;">Udostępnianie</span>
<span class="t" style="left:296px;top:27px;letter-spacing:0.26px;">Widok</span>
<span class="t" style="left:369px;top:27px;letter-spacing:-0.23px;">Zarządzanie</span>
<span class="t" style="left:1352px;top:26px;font-size:11px;color:#fff;font-weight:bold;">?</span>
<span class="t" style="left:8px;top:88px;letter-spacing:-0.05px;">Przypnij do paska</span>
<span class="t" style="left:17px;top:101px;letter-spacing:-0.05px;">Szybki dostęp</span>
<span class="t" style="left:105px;top:88px;color:#8a8a8a;letter-spacing:0.01px;">Kopiuj</span>
<span class="t" style="left:148px;top:88px;color:#8a8a8a;letter-spacing:0.47px;">Wklej</span>
<span class="t" style="left:207px;top:54px;color:#8a8a8a;letter-spacing:0.36px;">Wytnij</span>
<span class="t" style="left:207px;top:76px;color:#8a8a8a;letter-spacing:-0.12px;">Kopiuj ścieżkę</span>
<span class="t" style="left:207px;top:98px;color:#8a8a8a;letter-spacing:0.18px;">Wklej skrót</span>
<span class="t" style="left:121px;top:121px;color:#6d6d6d;letter-spacing:-0.28px;">Schowek</span>
<span class="t" style="left:296px;top:88px;color:#8a8a8a;letter-spacing:-0.39px;">Przenieś</span>
<span class="t" style="left:307px;top:101px;color:#8a8a8a;letter-spacing:-0.8px;">do</span>
<span class="t" style="left:345.5px;top:88px;color:#8a8a8a;letter-spacing:-0.09px;">Kopiuj</span>
<span class="t" style="left:350.5px;top:101px;color:#8a8a8a;letter-spacing:-0.8px;">do</span>
<span class="t" style="left:398px;top:88px;letter-spacing:0.05px;">Usuń</span>
<span class="t" style="left:438px;top:88px;color:#8a8a8a;letter-spacing:-0.24px;">Zmień</span>
<span class="t" style="left:437px;top:101px;color:#8a8a8a;letter-spacing:-0.06px;">nazwę</span>
<span class="t" style="left:346px;top:121px;color:#6d6d6d;letter-spacing:0.11px;">Organizowanie</span>
<span class="t" style="left:492px;top:88px;letter-spacing:0.08px;">Nowy</span>
<span class="t" style="left:491px;top:101px;letter-spacing:0.44px;">folder</span>
<span class="t" style="left:550px;top:54px;letter-spacing:0.01px;">Nowy element</span>
<span class="t" style="left:550px;top:76px;letter-spacing:0.02px;">Łatwy dostęp</span>
<span class="t" style="left:546px;top:121px;color:#6d6d6d;letter-spacing:0.08px;">Nowy</span>
<span class="t" style="left:649px;top:88px;letter-spacing:-0.06px;">Właściwości</span>
<span class="t" style="left:736px;top:54px;color:#8a8a8a;letter-spacing:0.32px;">Otwórz</span>
<span class="t" style="left:736px;top:76px;color:#8a8a8a;letter-spacing:0.01px;">Edytuj</span>
<span class="t" style="left:736px;top:98px;letter-spacing:0.15px;">Historia</span>
<span class="t" style="left:689px;top:121px;color:#6d6d6d;letter-spacing:0.23px;">Otwieranie</span>
<span class="t" style="left:821px;top:54px;letter-spacing:-0.29px;">Zaznacz wszystko</span>
<span class="t" style="left:821px;top:76px;letter-spacing:-0.16px;">Nie zaznaczaj nic</span>
<span class="t" style="left:821px;top:98px;letter-spacing:-0.1px;">Odwróć zaznaczenie</span>
<span class="t" style="left:833px;top:121px;color:#6d6d6d;letter-spacing:-0.32px;">Zaznaczanie</span>
<span class="t" style="left:146px;top:147px;letter-spacing:0.39px;">Ten komputer</span>
<span class="t" style="left:243px;top:147px;letter-spacing:-0.04px;">Dysk lokalny (F:)</span>
<span class="t" style="left:1263px;top:148px;color:#6d6d6d;letter-spacing:-0.24px;">Przeszukaj...</span>
<span class="t" style="left:45px;top:186px;letter-spacing:-0.05px;">Szybki dostęp</span>
<span class="t" style="left:53px;top:210px;letter-spacing:0.44px;">Pulpit</span>
<span class="t" style="left:53px;top:234px;letter-spacing:0.09px;">Pobrane</span>
<span class="t" style="left:53px;top:258px;letter-spacing:0.48px;">Dokumenty</span>
<span class="t" style="left:53px;top:282px;letter-spacing:-0.02px;">Obrazy</span>
<span class="t" style="left:53px;top:306px;letter-spacing:0.02px;">Camera</span>
<span class="t" style="left:53px;top:330px;letter-spacing:-0.05px;">Dysk lokalny (F:</span>
<span class="t" style="left:53px;top:354px;letter-spacing:0.14px;">Zrzuty ekranu</span>
<span class="t" style="left:45px;top:386px;letter-spacing:0.06px;">OneDrive</span>
<span class="t" style="left:53px;top:410px;letter-spacing:0.35px;">Documents</span>
<span class="t" style="left:53px;top:434px;letter-spacing:0.06px;">Pictures</span>
<span class="t" style="left:45px;top:466px;letter-spacing:0.39px;">Ten komputer</span>
<span class="t" style="left:53px;top:490px;letter-spacing:0.48px;">Dokumenty</span>
<span class="t" style="left:53px;top:514px;letter-spacing:0.28px;">Muzyka</span>
<span class="t" style="left:53px;top:538px;letter-spacing:-0.02px;">Obrazy</span>
<span class="t" style="left:53px;top:562px;letter-spacing:0.09px;">Pobrane</span>
<span class="t" style="left:53px;top:586px;letter-spacing:0.44px;">Pulpit</span>
<span class="t" style="left:53px;top:610px;letter-spacing:0.35px;">Wideo</span>
<span class="t" style="left:53px;top:634px;letter-spacing:-0.33px;">OS (C:)</span>
<span class="t" style="left:53px;top:658px;letter-spacing:-0.05px;">Dysk lokalny (F:</span>
<span class="t" style="left:53px;top:682px;letter-spacing:-0.21px;width:82px;overflow:hidden;">SSD B obraz win</span>
<span class="t" style="left:173px;top:179px;color:#4c607a;letter-spacing:-0.04px;">Nazwa</span>
<span class="t" style="left:434px;top:179px;color:#4c607a;letter-spacing:0.31px;">Data modyfikacji</span>
<span class="t" style="left:554px;top:179px;color:#4c607a;letter-spacing:-0.27px;">Typ</span>
<span class="t" style="left:674px;top:179px;color:#4c607a;letter-spacing:0.03px;">Rozmiar</span>
<span class="t" style="left:194px;top:208px;letter-spacing:0.18px;">images</span>
<span class="t" style="left:434px;top:208px;color:#6d6d6d;letter-spacing:-0.37px;">07.03.2016 21:03</span>
<span class="t" style="left:554px;top:208px;color:#6d6d6d;letter-spacing:0.27px;">Folder plików</span>
<span class="t" style="left:194px;top:229px;letter-spacing:-0.03px;">flash_all</span>
<span class="t" style="left:434px;top:229px;color:#6d6d6d;letter-spacing:-0.37px;">23.02.2016 16:25</span>
<span class="t" style="left:554px;top:229px;color:#6d6d6d;letter-spacing:0.13px;">Plik wsadowy Win...</span>
<span class="t" style="left:717px;top:229px;color:#6d6d6d;letter-spacing:-0.65px;">3 KB</span>
<span class="t" style="left:194px;top:250px;letter-spacing:-0.05px;">flash_all.sh</span>
<span class="t" style="left:434px;top:250px;color:#6d6d6d;letter-spacing:-0.37px;">23.02.2016 16:25</span>
<span class="t" style="left:554px;top:250px;color:#6d6d6d;letter-spacing:-0.12px;">Plik SH</span>
<span class="t" style="left:717px;top:250px;color:#6d6d6d;letter-spacing:-0.65px;">2 KB</span>
<span class="t" style="left:194px;top:271px;letter-spacing:-0.11px;">flash_all_except_data_storage</span>
<span class="t" style="left:434px;top:271px;color:#6d6d6d;letter-spacing:-0.37px;">23.02.2016 16:25</span>
<span class="t" style="left:554px;top:271px;color:#6d6d6d;letter-spacing:0.13px;">Plik wsadowy Win...</span>
<span class="t" style="left:717px;top:271px;color:#6d6d6d;letter-spacing:-0.65px;">3 KB</span>
<span class="t" style="left:194px;top:292px;letter-spacing:-0.11px;">flash_all_except_data_storage.sh</span>
<span class="t" style="left:434px;top:292px;color:#6d6d6d;letter-spacing:-0.37px;">23.02.2016 16:25</span>
<span class="t" style="left:554px;top:292px;color:#6d6d6d;letter-spacing:-0.12px;">Plik SH</span>
<span class="t" style="left:717px;top:292px;color:#6d6d6d;letter-spacing:-0.65px;">2 KB</span>
<span class="t" style="left:194px;top:313px;letter-spacing:0.12px;">misc</span>
<span class="t" style="left:434px;top:313px;color:#6d6d6d;letter-spacing:-0.37px;">23.02.2016 16:32</span>
<span class="t" style="left:554px;top:313px;color:#6d6d6d;letter-spacing:0.35px;">Dokument tekstowy</span>
<span class="t" style="left:717px;top:313px;color:#6d6d6d;letter-spacing:-0.65px;">1 KB</span>
<span class="t" style="left:14px;top:709px;color:#1e3287;letter-spacing:0.03px;">Elementy: 6</span>
<span class="t" style="left:1058.5px;top:740px;color:#ececec;letter-spacing:0.34px;">Pulpit</span>
<span class="t" style="left:1309px;top:731px;color:#fff;letter-spacing:0.05px;">21:30</span>
<span class="t" style="left:1296px;top:748px;color:#fff;letter-spacing:-0.4px;">07.03.2016</span>
</div>
</body>
</html>
